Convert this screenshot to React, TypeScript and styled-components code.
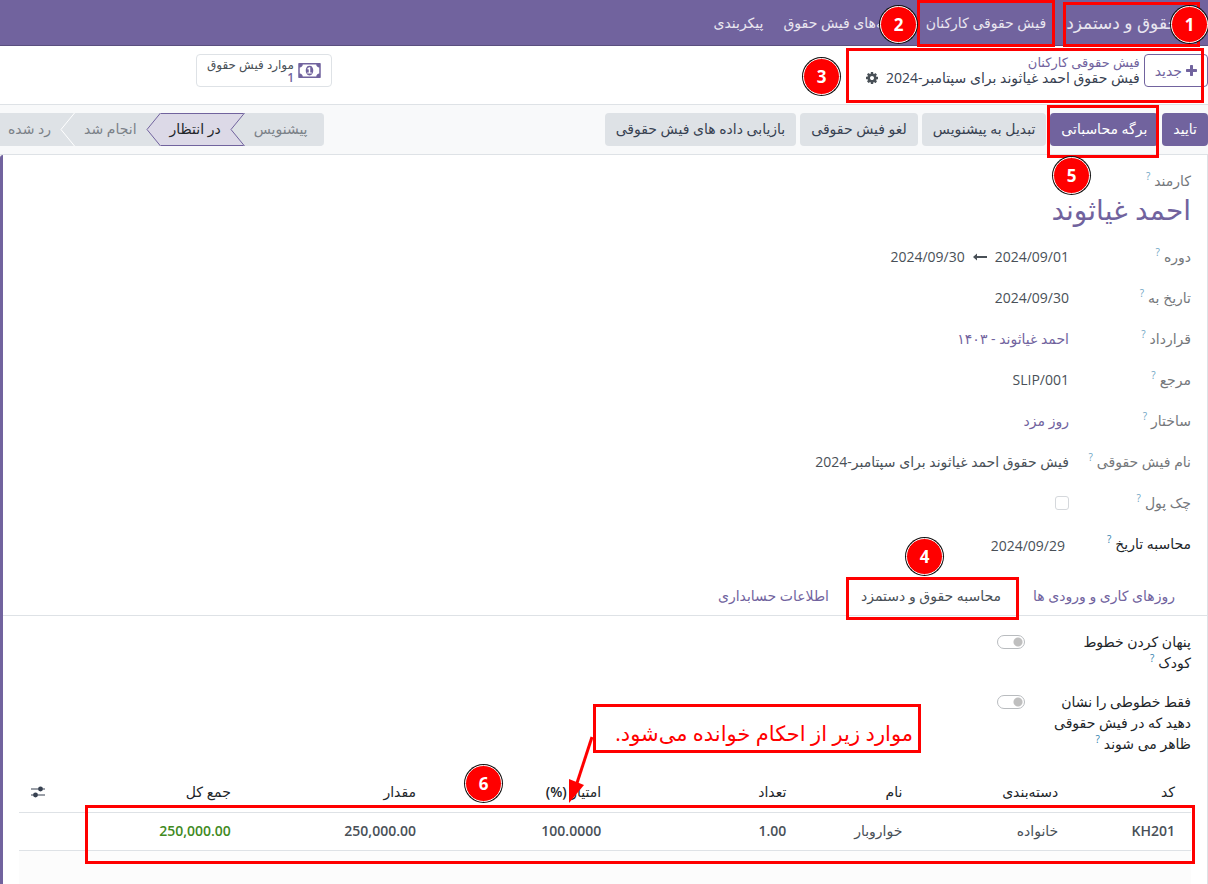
import React from 'react';
import styled, { createGlobalStyle } from 'styled-components';

const purple = '#71639e';
const red = '#ff0000';
const line = '#dee2e6';

const GlobalStyle = createGlobalStyle`
  *, *::before, *::after { box-sizing: border-box; }
  body {
    margin: 0;
    background: #fff;
    color: #495057;
    font-family: 'Open Sans', 'DejaVu Sans', sans-serif;
    font-size: 14px;
    line-height: 21px;
  }
  button, input { font: inherit; color: inherit; }
  a { color: ${purple}; text-decoration: none; }
`;

const Page = styled.div`
  position: relative;
  display: flex;
  flex-direction: column;
  min-height: 100vh;
  overflow: hidden;
`;

const NavBar = styled.nav`
  display: flex;
  align-items: center;
  height: 46px;
  padding: 0 20px;
  background: ${purple};
  border-bottom: 1px solid #5a4f7f;
`;

const Brand = styled.a`
  padding: 0 10px;
  font-size: 17px;
  color: #e9e6f0;
`;

const NavLink = styled.a`
  padding: 0 10px;
  color: #e9e6f0;
`;

const ControlPanel = styled.header`
  display: flex;
  align-items: flex-start;
  height: 59px;
  padding-top: 8px;
  border-bottom: 1px solid ${line};
`;

const NewButton = styled.button`
  display: flex;
  align-items: center;
  gap: 4px;
  height: 33px;
  padding: 0 10px;
  background: #fff;
  border: 1px solid ${purple};
  border-radius: 4px;
  color: ${purple};
`;

const Crumbs = styled.div`
  display: flex;
  flex: 1;
  flex-direction: column;
  align-items: flex-start;
  padding-right: 4px;
  line-height: 16px;
`;

const CrumbLink = styled.a`
  font-size: 13px;
`;

const CrumbTitle = styled.div`
  display: flex;
  align-items: center;
  gap: 8px;
  color: #374151;
`;

const IconButton = styled.button`
  display: flex;
  padding: 0;
  background: none;
  border: 0;
  color: #495057;
`;

const StatButton = styled.button`
  display: flex;
  align-items: center;
  gap: 4px;
  height: 33px;
  margin-left: 196px;
  padding: 0 10px;
  background: #fff;
  border: 1px solid ${line};
  border-radius: 4px;
  color: ${purple};
`;

const StatText = styled.span`
  display: flex;
  flex-direction: column;
  align-items: flex-start;
  font-size: 12px;
  line-height: 13px;
`;

const StatLabel = styled.span`
  color: #495057;
`;

const StatValue = styled.span`
  font-weight: 600;
`;

const StatusRow = styled.div`
  display: flex;
  align-items: center;
  gap: 4px;
  height: 50px;
  background: #f8f9fa;
  border-bottom: 1px solid ${line};
`;

const ActionButton = styled.button<{ $primary?: boolean }>`
  height: 33px;
  padding: 0 11px 2px;
  border: 0;
  border-radius: 4px;
  white-space: nowrap;
  background: ${(p) => (p.$primary ? purple : line)};
  color: ${(p) => (p.$primary ? '#fff' : '#374151')};
`;

const Steps = styled.div`
  display: flex;
  margin-right: auto;
`;

const Step = styled.button<{ $active?: boolean; $order: number }>`
  position: relative;
  z-index: ${(p) => p.$order};
  height: 33px;
  padding: 0 23px 2px 10px;
  border: solid ${(p) => (p.$active ? purple : line)};
  border-width: 1px 0;
  white-space: nowrap;
  background: ${(p) => (p.$active ? '#dcd9e7' : line)};
  color: ${(p) => (p.$active ? '#212529' : '#7b8188')};
  &:first-child {
    padding-right: 16px;
    border-radius: 0 4px 4px 0;
  }
  &:last-child { padding-left: 8px; }
`;

const StepTip = styled.svg`
  position: absolute;
  top: -1px;
  left: -14px;
`;

const Sheet = styled.main`
  display: flex;
  flex: 1;
  flex-direction: column;
  padding-top: 15px;
  border-left: 3px solid ${purple};
  border-right: 1px solid ${line};
  border-top-left-radius: 3px;
`;

const Section = styled.section`
  padding: 0 16px;
`;

const FieldLabel = styled.label<{ $strong?: boolean }>`
  color: ${(p) => (p.$strong ? '#212529' : '#74777b')};
`;

const Hint = styled.sup<{ $strong?: boolean }>`
  margin-right: 4px;
  font-size: 10px;
  line-height: 0;
  color: ${(p) => (p.$strong ? '#2f7fae' : '#6fa5c4')};
`;

const EmployeeName = styled.h1`
  margin: 0 0 9px;
  font-size: 28px;
  font-weight: 400;
  line-height: 36px;
  color: ${purple};
`;

const FieldRow = styled.div`
  display: grid;
  grid-template-columns: 122px 1fr;
  align-items: center;
  height: 41px;
`;

const Value = styled.div`
  display: flex;
  align-items: center;
  gap: 8px;
`;

const DateInput = styled.input`
  width: 120px;
  padding: 3px 4px 0;
  background: none;
  border: 0;
`;

const CheckBox = styled.input`
  appearance: none;
  width: 14px;
  height: 14px;
  margin: 0;
  border: 1px solid #d5d8dc;
  border-radius: 3px;
`;

const Tabs = styled.div`
  display: flex;
  height: 52px;
  padding: 0 16px;
  border-bottom: 1px solid ${line};
`;

const Tab = styled.button<{ $active?: boolean }>`
  padding: 12px 16px 0;
  background: none;
  border: 0;
  white-space: nowrap;
  color: ${(p) => (p.$active ? '#495057' : purple)};
`;

const ToggleRow = styled.div`
  display: grid;
  grid-template-columns: 138px 1fr;
  align-items: start;
  gap: 28px;
  margin-bottom: 18px;
`;

const Toggle = styled.input`
  appearance: none;
  width: 28px;
  height: 14px;
  margin: 4px 0 0;
  border: 1px solid #b9bcbf;
  border-radius: 7px;
  background: radial-gradient(circle at 20px 6px, #bfbfbf 4px, transparent 5px);
`;

const Options = styled(Section)`
  padding-top: 15px;
`;

const TableArea = styled.div`
  display: flex;
  flex: 1;
  flex-direction: column;
  margin: 0 16px;
`;

const Lines = styled.table`
  width: 100%;
  table-layout: fixed;
  border-collapse: collapse;
`;

const Head = styled.th`
  height: 40px;
  padding: 0 5px;
  border-bottom: 1px solid ${line};
  font-weight: 500;
  text-align: right;
  color: #212529;
  &:first-child { padding-right: 16px; }
`;

const Unit = styled.span`
  font-weight: 600;
`;

const Cell = styled.td<{ $bold?: boolean; $good?: boolean }>`
  height: 38px;
  padding: 0 5px 2px;
  border-bottom: 1px solid ${line};
  text-align: right;
  font-weight: ${(p) => (p.$bold ? 600 : 400)};
  color: ${(p) => (p.$good ? '#418a1e' : '#495057')};
  &:first-child { padding-right: 16px; }
`;

const ColumnsButton = styled.button`
  display: flex;
  padding: 0;
  background: none;
  border: 0;
  color: #374151;
`;

const EmptyRows = styled.div`
  flex: 1;
  min-height: 33px;
  background: #fcfcfc;
`;

/* Tutorial marks that lie over the form */
const Mark = styled.div<{ $x: number; $y: number; $w: number; $h: number }>`
  position: absolute;
  z-index: 10;
  right: ${(p) => p.$x}px;
  top: ${(p) => p.$y}px;
  width: ${(p) => p.$w}px;
  height: ${(p) => p.$h}px;
  border: 3px solid ${red};
  pointer-events: none;
`;

const Note = styled(Mark)`
  padding: 11px 5px 0;
  font-size: 21px;
  line-height: 30px;
  white-space: nowrap;
  color: ${red};
`;

const Badge = styled.div<{ $x: number; $y: number }>`
  position: absolute;
  z-index: 11;
  right: ${(p) => p.$x}px;
  top: ${(p) => p.$y}px;
  display: flex;
  align-items: center;
  justify-content: center;
  width: 37px;
  height: 37px;
  border: 1px solid #fff;
  border-radius: 50%;
  box-shadow: 0 0 0 1px #111;
  background: ${red};
  font-size: 17px;
  font-weight: 700;
  color: #fff;
`;

const Pointer = styled.svg`
  position: absolute;
  z-index: 10;
  right: 612px;
  top: 733px;
`;

const PlusIcon = () => (
  <svg width="11" height="14" viewBox="192 0 1408 1792" fill="currentColor">
    <path d="M1600 736v192q0 40-28 68t-68 28h-416v416q0 40-28 68t-68 28h-192q-40 0-68-28t-28-68v-416h-416q-40 0-68-28t-28-68v-192q0-40 28-68t68-28h416v-416q0-40 28-68t68-28h192q40 0 68 28t28 68v416h416q40 0 68 28t28 68z" />
  </svg>
);

const GearIcon = () => (
  <svg width="12" height="14" viewBox="128 0 1536 1792" fill="currentColor">
    <path d="M1152 896q0-106-75-181t-181-75-181 75-75 181 75 181 181 75 181-75 75-181zm512-109v222q0 12-8 23t-20 13l-185 28q-19 54-39 91 35 50 107 138 10 12 10 25t-9 23q-27 37-99 108t-94 71q-12 0-26-9l-138-108q-44 23-91 38-16 136-29 186-7 28-36 28h-222q-14 0-24.5-8.5t-11.5-21.5l-28-184q-49-16-90-37l-141 107q-10 9-25 9-14 0-25-11-126-114-165-168-7-10-7-23 0-12 8-23 15-21 51-66.5t54-70.5q-27-50-41-99l-183-27q-13-2-21-12.5t-8-23.5v-222q0-12 8-23t19-13l186-28q14-46 39-92-40-57-107-138-10-12-10-24 0-10 9-23 26-36 98.5-107.5t94.5-71.5q13 0 26 10l138 107q44-23 91-38 16-136 29-186 7-28 36-28h222q14 0 24.5 8.5t11.5 21.5l28 184q49 16 90 37l142-107q9-9 24-9 13 0 25 10 129 119 165 170 7 8 7 22 0 12-8 23-15 21-51 66.5t-54 70.5q26 50 41 98l183 28q13 2 21 12.5t8 23.5z" />
  </svg>
);

const MoneyIcon = () => (
  <svg width="23" height="21" viewBox="0 0 1920 1792" fill="currentColor">
    <path d="M768 1152h384v-96h-128v-448h-114l-148 137 77 80q42-37 55-57h2v288h-128v96zm512-256q0 70-21 142t-59.5 134-101.5 101-138 39-138-39-101.5-101-59.5-134-21-142 21-142 59.5-134 101.5-101 138-39 138 39 101.5 101 59.5 134 21 142zm512 256v-512q-106 0-181-75t-75-181h-1152q0 106-75 181t-181 75v512q106 0 181 75t75 181h1152q0-106 75-181t181-75zm128-832v1152q0 26-19 45t-45 19h-1792q-26 0-45-19t-19-45v-1152q0-26 19-45t45-19h1792q26 0 45 19t19 45z" />
  </svg>
);

const ArrowIcon = () => (
  <svg width="14" height="10" viewBox="0 0 14 10" fill="currentColor">
    <path d="M0 5L4 1.5V4H14V6H4V8.5Z" />
  </svg>
);

const SlidersIcon = () => (
  <svg width="14" height="12" viewBox="0 0 14 12" fill="currentColor">
    <path d="M0 2.5H14V3.5H0ZM0 8.5H14V9.5H0Z" />
    <circle cx="9.5" cy="3" r="2.4" />
    <circle cx="4.5" cy="9" r="2.4" />
  </svg>
);

const steps = [
  { name: 'پیشنویس', fill: line, stroke: purple },
  { name: 'در انتظار', fill: '#dcd9e7', stroke: purple, active: true },
  { name: 'انجام شد', fill: line, stroke: '#fff' },
  { name: 'رد شده', fill: line, stroke: line },
];

const fields: { id: string; label: string; value: React.ReactNode }[] = [
  { id: 'period', label: 'دوره', value: <><span>2024/09/01</span><ArrowIcon /><span>2024/09/30</span></> },
  { id: 'date', label: 'تاریخ به', value: '2024/09/30' },
  { id: 'contract', label: 'قرارداد', value: <a href="#contract">احمد غیاثوند - ۱۴۰۳</a> },
  { id: 'ref', label: 'مرجع', value: 'SLIP/001' },
  { id: 'struct', label: 'ساختار', value: <a href="#struct">روز مزد</a> },
  { id: 'name', label: 'نام فیش حقوقی', value: 'فیش حقوق احمد غیاثوند برای سپتامبر-2024' },
  { id: 'cheque', label: 'چک پول', value: <CheckBox type="checkbox" id="cheque" /> },
];

const widths = ['10.9%', '13.3%', '9.9%', '15.8%', '15.8%', '15.8%', '15.9%', '2.6%'];

const marks = [
  [8, 2, 137, 45],
  [153, 0, 138, 47],
  [4, 48, 358, 55],
  [49, 105, 112, 53],
  [189, 577, 173, 43],
  [13, 805, 1110, 59],
];

const badges = [
  [1, 0, 6],
  [2, 291, 6],
  [3, 368, 58],
  [4, 265, 538],
  [5, 118, 157],
  [6, 706, 765],
];

export default function App() {
  return (
    <Page dir="rtl" lang="fa">
      <GlobalStyle />
      <NavBar>
        <Brand href="#home">حقوق و دستمزد</Brand>
        <NavLink href="#payslips">فیش حقوقی کارکنان</NavLink>
        <NavLink href="#batches">دسته‌های فیش حقوق</NavLink>
        <NavLink href="#config">پیکربندی</NavLink>
      </NavBar>

      <ControlPanel>
        <NewButton type="button"><PlusIcon />جدید</NewButton>
        <Crumbs>
          <CrumbLink href="#payslips">فیش حقوقی کارکنان</CrumbLink>
          <CrumbTitle>
            <span>فیش حقوق احمد غیاثوند برای سپتامبر-2024</span>
            <IconButton type="button" aria-label="تنظیمات"><GearIcon /></IconButton>
          </CrumbTitle>
        </Crumbs>
        <StatButton type="button">
          <MoneyIcon />
          <StatText>
            <StatLabel>موارد فیش حقوق</StatLabel>
            <StatValue>1</StatValue>
          </StatText>
        </StatButton>
      </ControlPanel>

      <StatusRow>
        <ActionButton type="button" $primary>تایید</ActionButton>
        <ActionButton type="button" $primary>برگه محاسباتی</ActionButton>
        <ActionButton type="button">تبدیل به پیشنویس</ActionButton>
        <ActionButton type="button">لغو فیش حقوقی</ActionButton>
        <ActionButton type="button">بازیابی داده های فیش حقوقی</ActionButton>
        <Steps>
          {steps.map((s, i) => (
            <Step key={s.name} type="button" $active={s.active} $order={steps.length - i}>
              {s.name}
              {i < steps.length - 1 && (
                <StepTip width="15" height="33" viewBox="0 0 15 33">
                  <path d="M15 0H14L1 16.5L14 33H15Z" fill={s.fill} />
                  <path d="M14.5 0L1 16.5L14.5 33" fill="none" stroke={s.stroke} />
                </StepTip>
              )}
            </Step>
          ))}
        </Steps>
      </StatusRow>

      <Sheet>
        <Section>
          <FieldLabel as="div">کارمند<Hint>?</Hint></FieldLabel>
          <EmployeeName>احمد غیاثوند</EmployeeName>
          {fields.map((f) => (
            <FieldRow key={f.id}>
              <FieldLabel htmlFor={f.id}>{f.label}<Hint>?</Hint></FieldLabel>
              <Value>{f.value}</Value>
            </FieldRow>
          ))}
          <FieldRow>
            <FieldLabel htmlFor="calc-date" $strong>محاسبه تاریخ<Hint $strong>?</Hint></FieldLabel>
            <Value><DateInput id="calc-date" type="text" defaultValue="2024/09/29" /></Value>
          </FieldRow>
        </Section>

        <Tabs role="tablist">
          <Tab type="button" role="tab">روزهای کاری و ورودی ها</Tab>
          <Tab type="button" role="tab" aria-selected $active>محاسبه حقوق و دستمزد</Tab>
          <Tab type="button" role="tab">اطلاعات حسابداری</Tab>
        </Tabs>

        <Options>
          <ToggleRow>
            <FieldLabel htmlFor="hide-child" $strong>پنهان کردن خطوط کودک<Hint $strong>?</Hint></FieldLabel>
            <Toggle id="hide-child" type="checkbox" />
          </ToggleRow>
          <ToggleRow>
            <FieldLabel htmlFor="only-visible" $strong>فقط خطوطی را نشان دهید که در فیش حقوقی ظاهر می شوند<Hint $strong>?</Hint></FieldLabel>
            <Toggle id="only-visible" type="checkbox" />
          </ToggleRow>
        </Options>

        <TableArea>
          <Lines>
            <colgroup>
              {widths.map((w, i) => <col key={i} style={{ width: w }} />)}
            </colgroup>
            <thead>
              <tr>
                <Head>کد</Head>
                <Head>دسته‌بندی</Head>
                <Head>نام</Head>
                <Head>تعداد</Head>
                <Head>امتیاز <Unit>(%)</Unit></Head>
                <Head>مقدار</Head>
                <Head>جمع کل</Head>
                <Head><ColumnsButton type="button" aria-label="ستون‌ها"><SlidersIcon /></ColumnsButton></Head>
              </tr>
            </thead>
            <tbody>
              <tr>
                <Cell $bold>KH201</Cell>
                <Cell>خانواده</Cell>
                <Cell>خواروبار</Cell>
                <Cell $bold>1.00</Cell>
                <Cell $bold>100.0000</Cell>
                <Cell $bold>250,000.00</Cell>
                <Cell $bold $good>250,000.00</Cell>
                <Cell />
              </tr>
            </tbody>
          </Lines>
          <EmptyRows />
        </TableArea>
      </Sheet>

      {marks.map(([x, y, w, h]) => <Mark key={`${x}-${y}`} $x={x} $y={y} $w={w} $h={h} />)}
      <Note $x={287} $y={704} $w={328} $h={49}>موارد زیر از احکام خوانده می‌شود.</Note>
      <Pointer width="32" height="72" viewBox="0 0 32 72">
        <path d="M28 4L13 50" stroke={red} strokeWidth="3" />
        <path d="M5 70V46L20 52Z" fill={red} />
      </Pointer>
      {badges.map(([n, x, y]) => <Badge key={n} $x={x} $y={y}>{n}</Badge>)}
    </Page>
  );
}
